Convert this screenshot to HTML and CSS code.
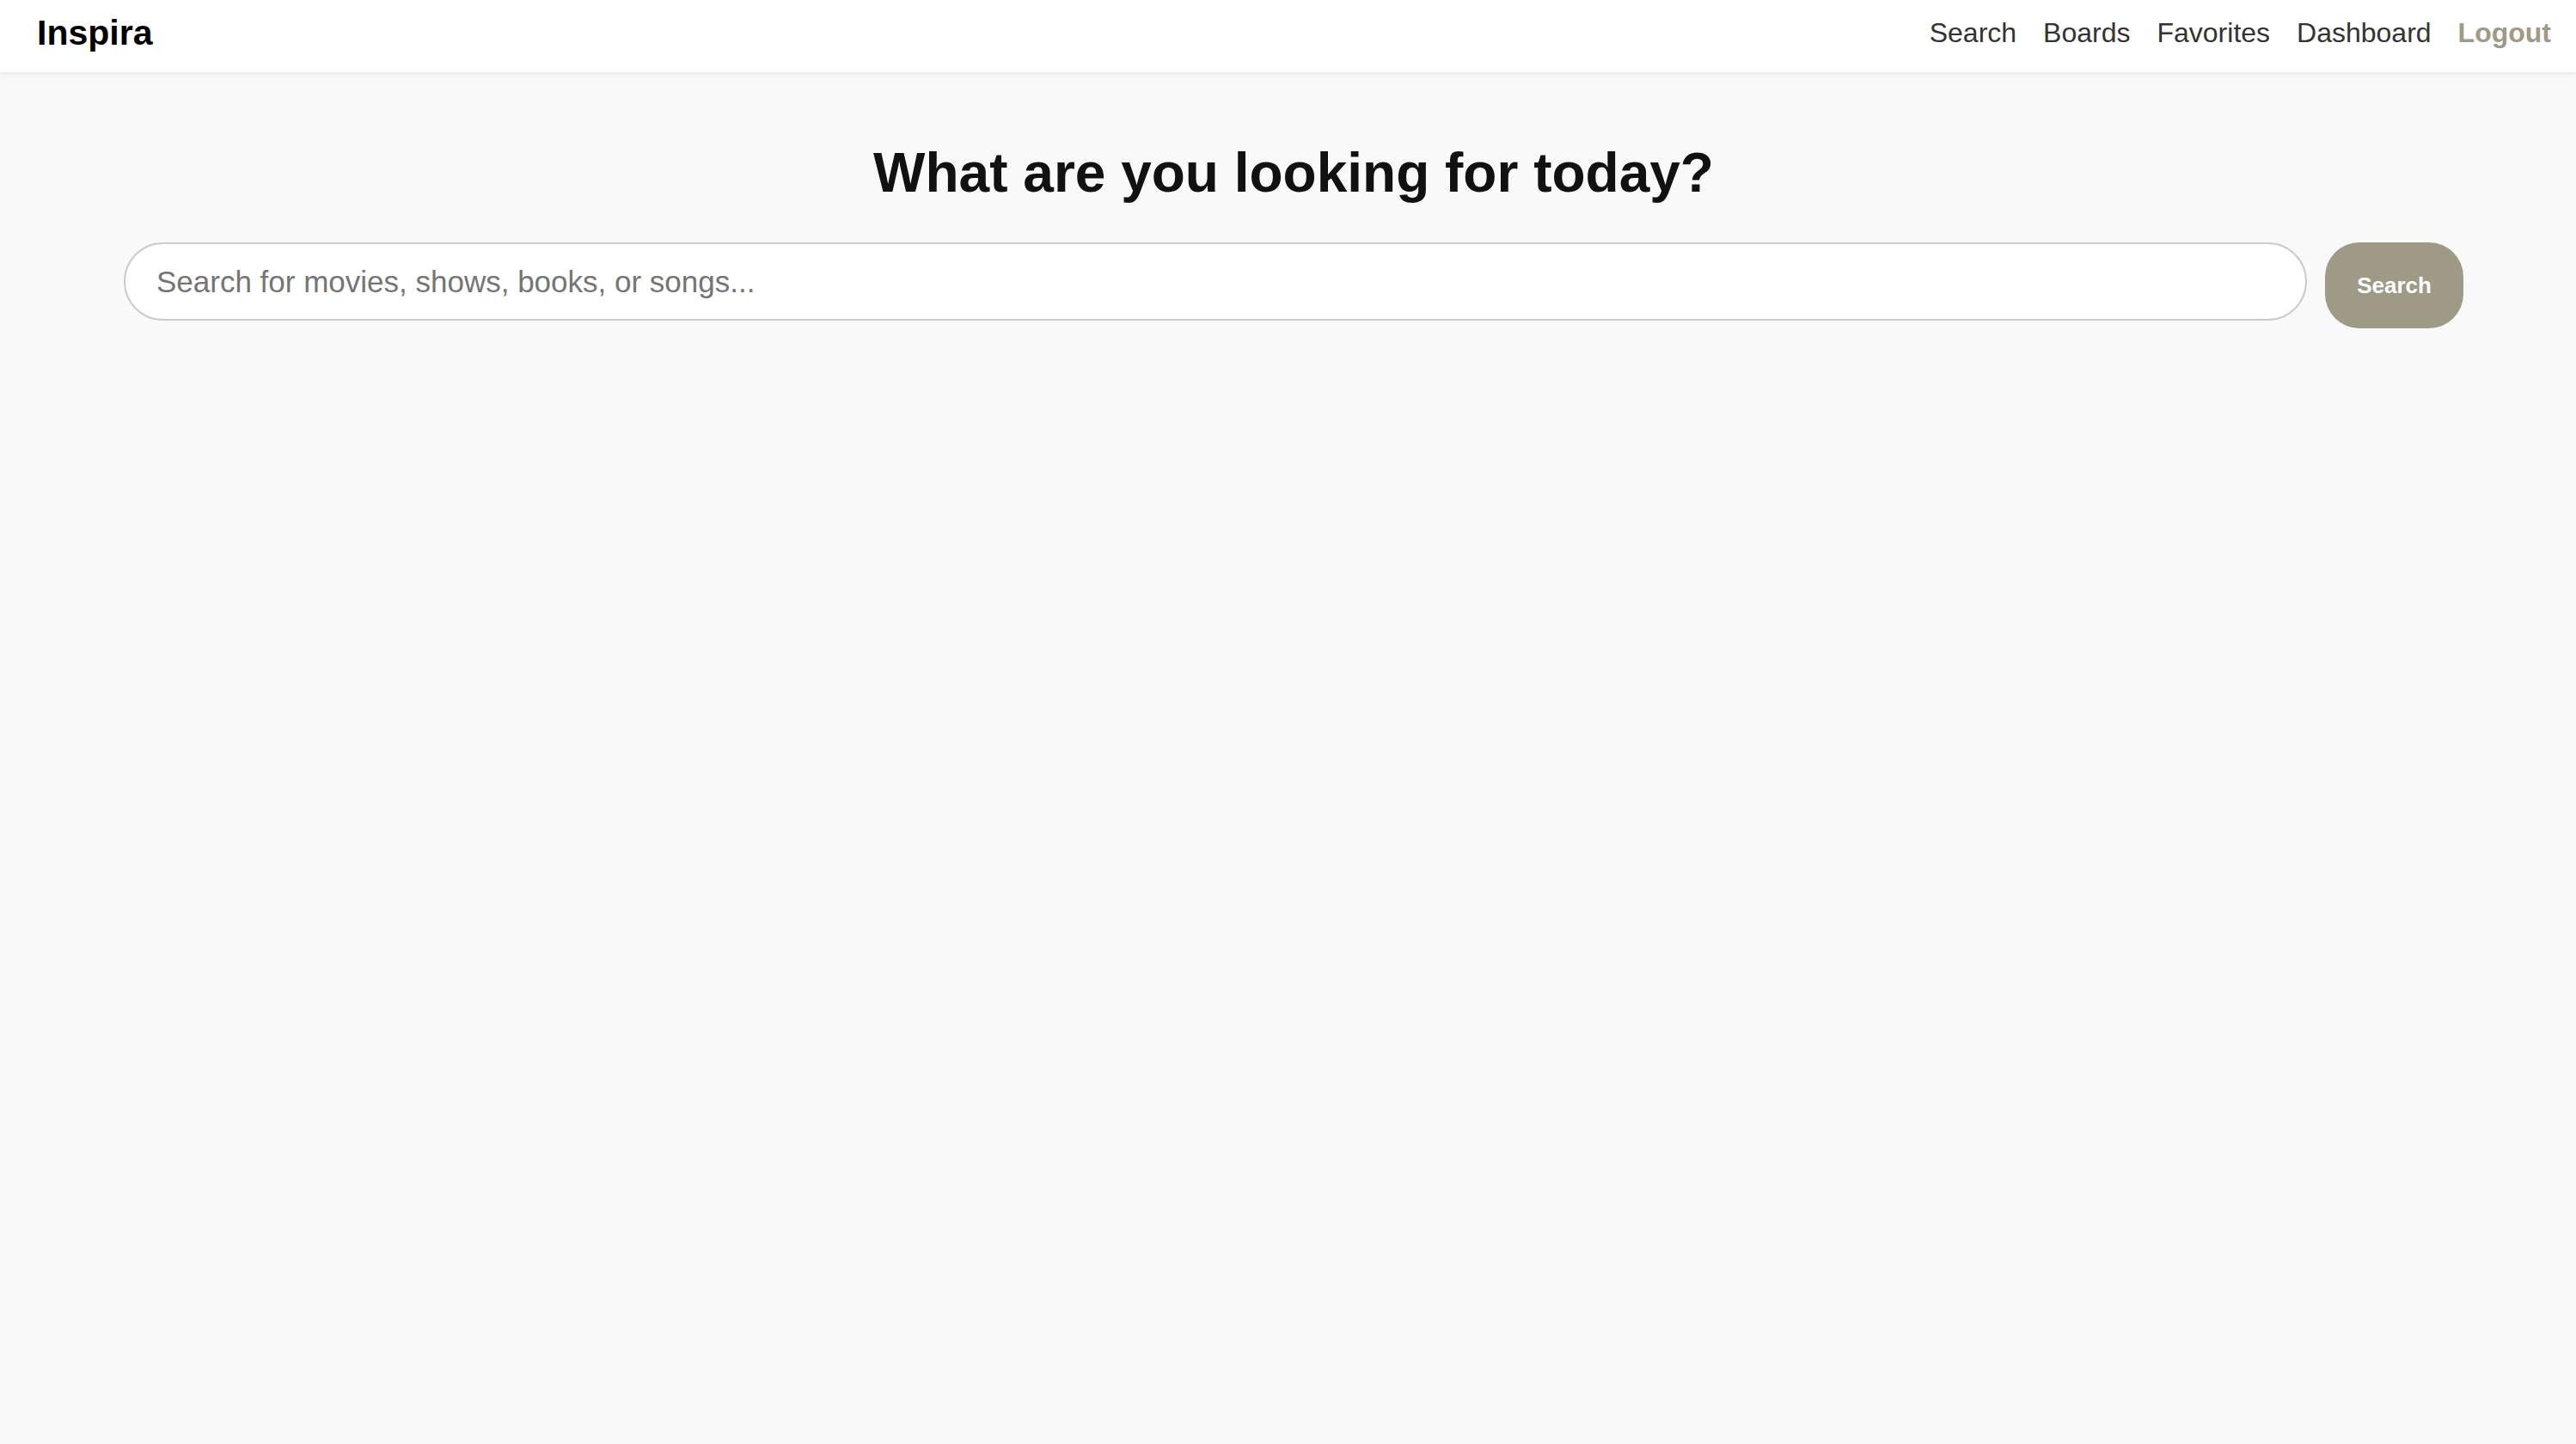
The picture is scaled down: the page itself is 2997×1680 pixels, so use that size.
FILE: index.html
```html
<!DOCTYPE html>
<html lang="en">
<head>
    <meta charset="UTF-8">
    <meta name="viewport" content="width=device-width, initial-scale=1.0">
    <title>Inspira</title>
    <link rel="stylesheet" href="styles.css">
</head>
<body>
    <nav class="navbar">
        <a class="logo" href="#">Inspira</a>
        <div class="nav-links">
            <a href="#">Search</a>
            <a href="#">Boards</a>
            <a href="#">Favorites</a>
            <a href="#">Dashboard</a>
            <a href="#" class="logout">Logout</a>
        </div>
    </nav>

    <main class="search-page">
        <h1>What are you looking for today?</h1>
        <form class="search-form" onsubmit="return false;">
            <input type="text" class="search-input" placeholder="Search for movies, shows, books, or songs...">
            <button type="submit" class="search-btn">Search</button>
        </form>
        <div class="results" id="results"></div>
    </main>
</body>
</html>
```

FILE: styles.css
```css
body {
    font-family: 'Liberation Sans', Arial, Helvetica, sans-serif;
    background-color: #f9f9f9;
    margin: 0;
    min-height: 100vh;
}

a {
    text-decoration: none;
}

/* Top navigation */
.navbar {
    display: flex;
    justify-content: space-between;
    align-items: center;
    height: 84px;
    box-sizing: border-box;
    padding: 0 29px 8px 43px;
    background-color: white;
    box-shadow: 0 2px 6px rgba(0, 0, 0, 0.08);
}

.logo {
    font-size: 41px;
    font-weight: bold;
    color: #000;
}

.nav-links {
    display: flex;
    gap: 31px;
}

.nav-links a {
    font-size: 32px;
    color: #333;
}

.nav-links .logout {
    font-weight: bold;
    color: #9e9a85;
}

/* Search area */
.search-page {
    padding: 80px 131px 0 144px;
}

.search-page h1 {
    margin: 0 0 44px;
    font-size: 64px;
    text-align: center;
    color: #111;
}

.search-form {
    display: flex;
    align-items: flex-start;
    gap: 21px;
}

.search-input {
    flex: 1;
    height: 91px;
    box-sizing: border-box;
    padding: 0 36px;
    font-family: inherit;
    font-size: 35px;
    color: #333;
    background-color: white;
    border: 2px solid #ccc;
    border-radius: 46px;
    outline: none;
}

.search-input::placeholder {
    color: #757575;
}

.search-btn {
    width: 161px;
    height: 100px;
    font-family: inherit;
    font-size: 26px;
    font-weight: bold;
    color: white;
    background-color: #9e9a85;
    border: none;
    border-radius: 40px;
    cursor: pointer;
}

.search-btn:hover {
    background-color: #8a8672;
}
```
